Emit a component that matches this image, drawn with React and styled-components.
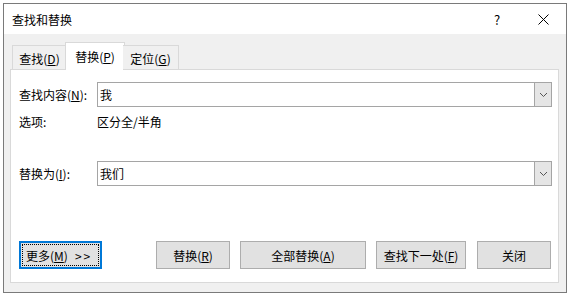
import React from 'react'
import styled, { createGlobalStyle } from 'styled-components'

const Global = createGlobalStyle`
  html, body { margin: 0; padding: 0; background: #fff; }
  body {
    font-family: "Noto Sans CJK SC", "Noto Sans", "Liberation Sans", sans-serif;
    font-size: 12px;
    color: #000;
    white-space: nowrap;
  }
  u { text-underline-offset: 1px; }
`

const Window = styled.div`
  margin: 3px 0 0 3px;
  width: 562px;
  height: 288px;
  border: 1px solid #7a7a7a;
  display: flex;
  flex-direction: column;
  background: #f0f0f0;
`

const TitleBar = styled.div`
  height: 30px;
  background: #fff;
  display: flex;
  align-items: center;
  padding-left: 8px;
`

const Title = styled.div`
  flex: 1;
  font-size: 12px;
`

const TitleButton = styled.div`
  width: 46px;
  height: 30px;
  display: flex;
  align-items: center;
  justify-content: center;
  font-size: 13px;
`

const Body = styled.div`
  flex: 1;
  display: flex;
  flex-direction: column;
  padding: 9px 7px 9px 6px;
`

const TabStrip = styled.div`
  height: 27px;
  display: flex;
  align-items: flex-end;
  padding-left: 2px;
  position: relative;
  z-index: 1;
  margin-bottom: -1px;
`

const Tab = styled.div`
  box-sizing: border-box;
  height: ${p => (p.$active ? '28px' : '25px')};
  width: ${p => p.$w}px;
  margin: ${p => (p.$active ? '0 -2px' : '0')};
  border: 1px solid #d9d9d9;
  border-bottom: ${p => (p.$active ? 'none' : '1px solid #d9d9d9')};
  ${p => !p.$active && 'border-left: none;'}
  ${p => p.$first && 'border-left: 1px solid #d9d9d9;'}
  background: ${p => (p.$active ? '#fff' : '#f0f0f0')};
  display: flex;
  align-items: center;
  justify-content: center;
  padding-top: ${p => (p.$active ? '0' : '1px')};
`

const Panel = styled.div`
  flex: 1;
  background: #fff;
  border: 1px solid #d9d9d9;
  display: flex;
  flex-direction: column;
  padding: 12px 6px 0 8px;
`

const Row = styled.div`
  display: flex;
  align-items: center;
  margin-top: ${p => p.$mt || 0}px;
  height: ${p => p.$h || 25}px;
`

const Label = styled.div`
  width: 78px;
  flex-shrink: 0;
`

const Combo = styled.div`
  flex: 1;
  height: 25px;
  box-sizing: border-box;
  border: 1px solid #a5a5a5;
  display: flex;
  align-items: stretch;
`

const ComboText = styled.div`
  flex: 1;
  display: flex;
  align-items: center;
  padding-left: 2px;
`

const ComboButton = styled.div`
  width: 16px;
  background: #e5e5e5;
  border-left: 1px solid #a5a5a5;
  display: flex;
  align-items: center;
  justify-content: center;
`

const ButtonRow = styled.div`
  display: flex;
  margin-top: auto;
  margin-bottom: 13px;
`

const Button = styled.div`
  box-sizing: border-box;
  width: ${p => p.$w}px;
  height: 28px;
  margin-left: ${p => p.$ml || 0}px;
  background: #e1e1e1;
  border: ${p => (p.$focus ? '2px solid #0078d7' : '1px solid #adadad')};
  display: flex;
  align-items: center;
  justify-content: center;
  padding: ${p => (p.$focus ? '1px' : '0')};
`

const Focus = styled.div`
  flex: 1;
  min-width: 0;
  align-self: stretch;
  border: 1px dotted #000;
  display: flex;
  align-items: center;
  padding-left: 3px;
`

const Arrows = styled.span`
  margin-left: 7px;
  letter-spacing: 2px;
`

const Chevron = () => (
  <svg width="9" height="6" viewBox="0 0 9 6">
    <path d="M1 1 L4.5 4.5 L8 1" fill="none" stroke="#555" strokeWidth="1" />
  </svg>
)

const CloseIcon = () => (
  <svg width="11" height="11" viewBox="0 0 11 11">
    <path d="M0.5 0.5 L10.5 10.5 M10.5 0.5 L0.5 10.5" stroke="#000" strokeWidth="1" />
  </svg>
)

export default function App() {
  return (
    <>
      <Global />
      <Window>
        <TitleBar>
          <Title>查找和替换</Title>
          <TitleButton>?</TitleButton>
          <TitleButton><CloseIcon /></TitleButton>
        </TitleBar>
        <Body>
          <TabStrip>
            <Tab $first $w={55}>查找(<u>D</u>)</Tab>
            <Tab $active $w={60}>替换(<u>P</u>)</Tab>
            <Tab $w={56}>定位(<u>G</u>)</Tab>
          </TabStrip>
          <Panel>
            <Row>
              <Label>查找内容(<u>N</u>):</Label>
              <Combo>
                <ComboText>我</ComboText>
                <ComboButton><Chevron /></ComboButton>
              </Combo>
            </Row>
            <Row $mt={6} $h={16}>
              <Label>选项:</Label>
              <div>区分全/半角</div>
            </Row>
            <Row $mt={32}>
              <Label>替换为(<u>I</u>):</Label>
              <Combo>
                <ComboText>我们</ComboText>
                <ComboButton><Chevron /></ComboButton>
              </Combo>
            </Row>
            <ButtonRow>
              <Button $focus $w={83}>
                <Focus>更多(<u>M</u>)<Arrows>&gt;&gt;</Arrows></Focus>
              </Button>
              <Button $w={74} $ml={54}>替换(<u>R</u>)</Button>
              <Button $w={126} $ml={10}>全部替换(<u>A</u>)</Button>
              <Button $w={90} $ml={10}>查找下一处(<u>F</u>)</Button>
              <Button $w={74} $ml={11}>关闭</Button>
            </ButtonRow>
          </Panel>
        </Body>
      </Window>
    </>
  )
}
